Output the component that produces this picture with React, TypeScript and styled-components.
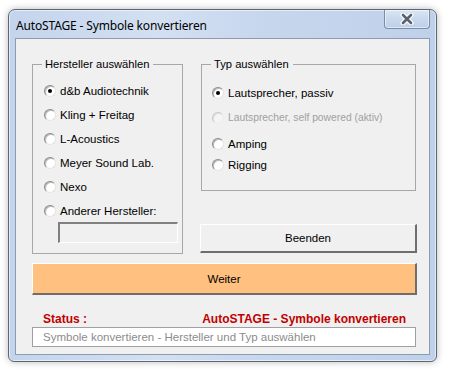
import React from "react";
import styled, { createGlobalStyle } from "styled-components";

const Global = createGlobalStyle`
  html, body { margin: 0; padding: 0; background: #ffffff; }
  body { width: 449px; height: 373px; overflow: hidden; }
`;

const Page = styled.div`
  padding: 9px 0 0 8px;
`;

const Window = styled.div`
  width: 429px;
  height: 353px;
  box-sizing: border-box;
  border: 1px solid #5e6673;
  border-radius: 7px 7px 6px 6px;
  background: linear-gradient(to right, #c3d4ec 0%, #d3e0f2 35%, #c6d6ed 60%, #bfd1ea 100%);
  box-shadow: 0 0 7px rgba(0, 0, 0, 0.28), inset 0 0 0 1px rgba(255, 255, 255, 0.55);
  display: flex;
  flex-direction: column;
  padding: 0 6px 6px 6px;
`;

const TitleBar = styled.div`
  height: 28px;
  display: flex;
  justify-content: space-between;
  align-items: flex-start;
`;

const Title = styled.div`
  font-family: "Noto Sans", "Open Sans", sans-serif;
  font-size: 12px;
  color: #000;
  padding: 7px 0 0 1px;
  letter-spacing: -0.15px;
`;

const CloseButton = styled.div`
  width: 46px;
  height: 19px;
  box-sizing: border-box;
  border: 1px solid #7d8ca3;
  border-top: none;
  border-radius: 0 0 4px 4px;
  background: linear-gradient(to bottom, #dbe6f4 0%, #c9d8ee 50%, #bccfea 100%);
  box-shadow: inset 0 0 0 1px rgba(255, 255, 255, 0.5);
  display: flex;
  align-items: center;
  justify-content: center;
`;

const Client = styled.div`
  flex: 1;
  box-sizing: border-box;
  border: 1px solid #8c9bb0;
  background: #f0f0f0;
  padding: 0 0 0 16px;
  display: flex;
  flex-direction: column;
  font-family: "Liberation Sans", Arial, sans-serif;
  font-size: 11px;
  color: #000;
`;

const TopRow = styled.div`
  display: flex;
  gap: 18px;
  margin-top: 18px;
`;

const Group = styled.fieldset<{ $w: number; $h: number }>`
  margin: 0;
  width: ${(p) => p.$w}px;
  height: ${(p) => p.$h}px;
  box-sizing: border-box;
  border: 1px solid #a7a7a7;
  padding: 0;
`;

const Legend = styled.legend<{ $x: number }>`
  margin-left: ${(p) => p.$x}px;
  padding: 0 4px 0 3px;
  font-size: 11.2px;
  line-height: 14px;
`;

const OptionList = styled.div<{ $pl: number; $pt: number }>`
  display: flex;
  flex-direction: column;
  padding: ${(p) => p.$pt}px 0 0 ${(p) => p.$pl}px;
`;

const Option = styled.label<{ $h: number; $disabled?: boolean }>`
  display: flex;
  align-items: center;
  height: ${(p) => p.$h}px;
  color: ${(p) => (p.$disabled ? "#a0a0a0" : "#000")};
  font-size: ${(p) => (p.$disabled ? "10.3px" : "11.5px")};
  gap: 4px;
`;

const Radio = styled.span<{ $checked?: boolean; $disabled?: boolean }>`
  width: 12px;
  height: 12px;
  box-sizing: border-box;
  border-radius: 50%;
  border: 1px solid;
  border-color: ${(p) =>
    p.$disabled ? "#c8c8c8 #ececec #ececec #c8c8c8" : "#8a8a8a #e3e3e3 #e3e3e3 #8a8a8a"};
  background: ${(p) => (p.$disabled ? "#f4f4f4" : "#ffffff")};
  box-shadow: inset 1px 1px 0 ${(p) => (p.$disabled ? "#e0e0e0" : "#b9b9b9")};
  display: flex;
  align-items: center;
  justify-content: center;
  flex: none;
  &::after {
    content: "";
    width: 4px;
    height: 4px;
    border-radius: 50%;
    background: #000;
    display: ${(p) => (p.$checked ? "block" : "none")};
  }
`;

const TextInput = styled.div`
  margin: -1px 0 0 25px;
  width: 120px;
  height: 21px;
  box-sizing: border-box;
  border-style: solid;
  border-width: 2px 1px 1px 2px;
  border-color: #808080 #ffffff #ffffff #808080;
  background: #f0f0f0;
`;

const RightCol = styled.div`
  display: flex;
  flex-direction: column;
`;

const Button = styled.div<{ $w: number; $h: number; $bg: string }>`
  width: ${(p) => p.$w}px;
  height: ${(p) => p.$h}px;
  box-sizing: border-box;
  background: ${(p) => p.$bg};
  border-style: solid;
  border-width: 1px 2px 2px 1px;
  border-color: #ffffff #6e6e6e #6e6e6e #ffffff;
  display: flex;
  align-items: center;
  justify-content: center;
  font-size: 11.5px;
  color: #000;
`;

const BeendenWrap = styled.div`
  margin: 33px 0 0 -1px;
`;

const WeiterWrap = styled.div`
  margin-top: 9px;
`;

const StatusRow = styled.div`
  display: flex;
  width: 363px;
  justify-content: space-between;
  margin: 17px 0 0 11px;
  font-weight: bold;
  color: #c00000;
  font-size: 12px;
  height: 14px;
  line-height: 14px;
`;

const StatusBox = styled.div`
  margin-top: 1px;
  width: 384px;
  height: 20px;
  box-sizing: border-box;
  border: 1px solid #a0a0a0;
  background: #ffffff;
  color: #8c8c8c;
  font-size: 11.5px;
  line-height: 18px;
  padding-left: 10px;
`;

const manufacturers = [
  "d&b Audiotechnik",
  "Kling + Freitag",
  "L-Acoustics",
  "Meyer Sound Lab.",
  "Nexo",
  "Anderer Hersteller:",
];

const types: { label: string; h: number; disabled?: boolean }[] = [
  { label: "Lautsprecher, passiv", h: 25 },
  { label: "Lautsprecher, self powered (aktiv)", h: 25, disabled: true },
  { label: "Amping", h: 27 },
  { label: "Rigging", h: 15 },
];

export default function App() {
  return (
    <>
      <Global />
      <Page>
        <Window>
          <TitleBar>
            <Title>AutoSTAGE - Symbole konvertieren</Title>
            <CloseButton>
              <svg width="14" height="12" viewBox="0 0 14 12">
                <path d="M3 2 L11 10 M11 2 L3 10" stroke="#ffffff" strokeWidth="5" strokeLinecap="round" />
                <path d="M3 2 L11 10 M11 2 L3 10" stroke="#5a6270" strokeWidth="2.6" strokeLinecap="round" />
              </svg>
            </CloseButton>
          </TitleBar>
          <Client>
            <TopRow>
              <Group $w={151} $h={197}>
                <Legend $x={9}>Hersteller auswählen</Legend>
                <OptionList $pl={11} $pt={8}>
                  {manufacturers.map((m, i) => (
                    <Option key={m} $h={24}>
                      <Radio $checked={i === 0} />
                      {m}
                    </Option>
                  ))}
                </OptionList>
                <TextInput />
              </Group>
              <RightCol>
                <Group $w={215} $h={134}>
                  <Legend $x={9}>Typ auswählen</Legend>
                  <OptionList $pl={10} $pt={9}>
                    {types.map((t, i) => (
                      <Option key={t.label} $h={t.h} $disabled={t.disabled}>
                        <Radio $checked={i === 0} $disabled={t.disabled} />
                        {t.label}
                      </Option>
                    ))}
                  </OptionList>
                </Group>
                <BeendenWrap>
                  <Button $w={217} $h={29} $bg="#f0f0f0">Beenden</Button>
                </BeendenWrap>
              </RightCol>
            </TopRow>
            <WeiterWrap>
              <Button $w={385} $h={32} $bg="#ffc080">Weiter</Button>
            </WeiterWrap>
            <StatusRow>
              <span>Status :</span>
              <span>AutoSTAGE - Symbole konvertieren</span>
            </StatusRow>
            <StatusBox>Symbole konvertieren - Hersteller und Typ auswählen</StatusBox>
          </Client>
        </Window>
      </Page>
    </>
  );
}
